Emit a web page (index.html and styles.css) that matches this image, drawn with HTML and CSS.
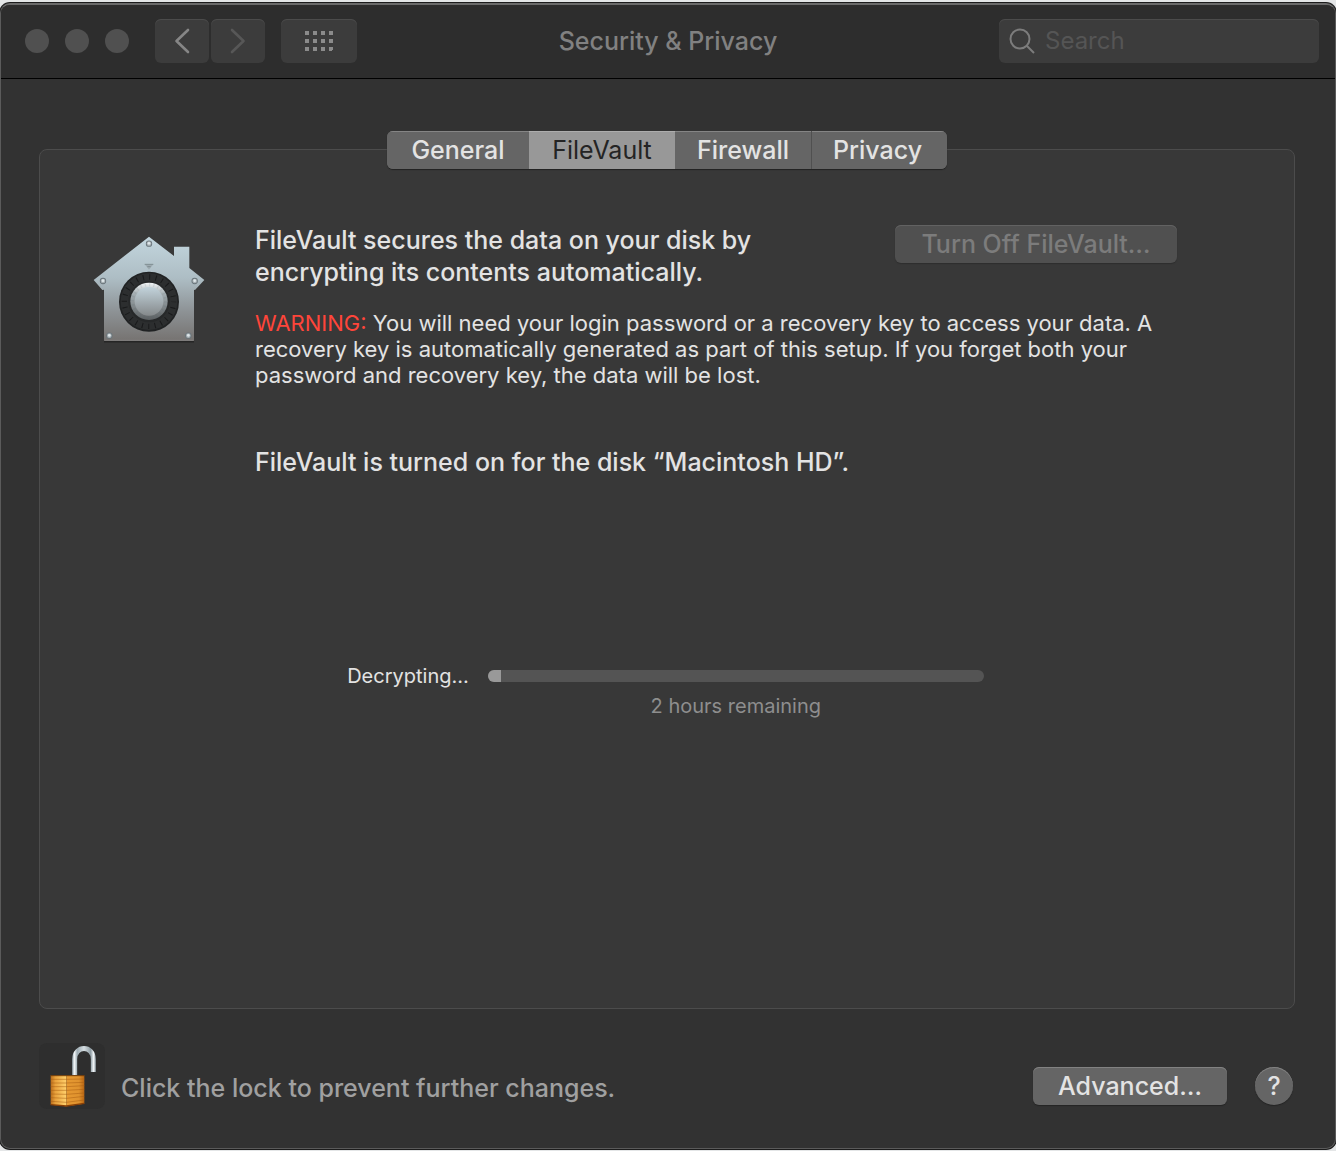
FILE: index.html
```html
<!DOCTYPE html>
<html lang="en">
<head>
<meta charset="utf-8">
<title>Security &amp; Privacy</title>
<link rel="stylesheet" href="styles.css">
</head>
<body>
<div class="window">
  <header class="titlebar">
    <div class="titlebar-left">
      <div class="lights">
        <button class="light" aria-label="Close"></button>
        <button class="light" aria-label="Minimize"></button>
        <button class="light" aria-label="Zoom"></button>
      </div>
      <div class="history">
        <button class="tool" aria-label="Back"><svg width="16" height="26" viewBox="0 0 16 26"><path d="M14 2 2.500 13 14 24" fill="none" stroke="#868686" stroke-width="2.600" stroke-linecap="round" stroke-linejoin="round"/></svg></button>
        <button class="tool" aria-label="Forward" disabled><svg width="16" height="26" viewBox="0 0 16 26"><path d="M2 2 13.500 13 2 24" fill="none" stroke="#575757" stroke-width="2.600" stroke-linecap="round" stroke-linejoin="round"/></svg></button>
      </div>
      <button class="tool tool-wide" aria-label="Show all"><svg width="28" height="20" viewBox="0 0 28 20" fill="#8b8b8b"><path d="M0 0h4v4H0zM8 0h4v4H8zM16 0h4v4h-4zM24 0h4v4h-4zM0 8h4v4H0zM8 8h4v4H8zM16 8h4v4h-4zM24 8h4v4h-4zM0 16h4v4H0zM8 16h4v4H8zM16 16h4v4h-4zM24 16h4v3h-1v1h-3z"/></svg></button>
    </div>
    <h1 class="title">Security &amp; Privacy</h1>
    <label class="search">
      <svg width="26" height="26" viewBox="0 0 26 26" fill="none" stroke="#7c7c7c" stroke-width="2"><circle cx="11" cy="11" r="9.500"/><path d="m18 18 7 7"/></svg>
      <input type="search" placeholder="Search" aria-label="Search">
    </label>
  </header>

  <main class="content">
    <div class="tabs" role="tablist">
      <button class="tab tab-general" role="tab">General</button>
      <button class="tab tab-filevault" role="tab" aria-selected="true">FileVault</button>
      <button class="tab tab-firewall" role="tab">Firewall</button>
      <button class="tab tab-privacy" role="tab">Privacy</button>
    </div>

    <section class="panel">
      <div class="info">
        <svg class="house" width="112" height="110" viewBox="39 30 336 330">
          <defs>
            <linearGradient id="metal" x1="0" y1="0" x2="0" y2="1"><stop offset="0" stop-color="#c3d6de"/><stop offset=".4" stop-color="#adbdc4"/><stop offset=".72" stop-color="#8d9295"/><stop offset="1" stop-color="#767371"/></linearGradient>
            <linearGradient id="rim" x1="0" y1="0" x2="0" y2="1"><stop offset="0" stop-color="#f4f7f8"/><stop offset=".3" stop-color="#a4aeb2"/><stop offset="1" stop-color="#5b5f61"/></linearGradient>
            <linearGradient id="knob" x1="0" y1="0" x2="0" y2="1"><stop offset="0" stop-color="#c2d3db"/><stop offset="1" stop-color="#85898b"/></linearGradient>
            <g id="screw"><circle r="9.500" fill="#69747a"/><circle r="7" fill="#aab3b7"/><circle cy="-1" r="4" fill="#dfe7ea"/></g>
          </defs>
          <path d="M72 350h270" stroke="#252525" stroke-width="5"/>
          <path d="M207 35 282 93V65h46v64l45 36-28 30-3-1v153H72V194l-5 1-26-30z" fill="url(#metal)"/>
          <path d="M73 346h268" stroke="#92908f" stroke-width="2"/>
          <path d="M194 118h26l-13 16z" fill="#9eabb1"/><path d="M194 118h26M202 125h10" stroke="#6e7b81" stroke-width="2"/>
          <circle cx="207" cy="230" r="90" fill="#202223"/>
          <circle cx="207" cy="230" r="85" fill="#2c2e2f"/>
          <circle cx="207" cy="230" r="74" fill="none" stroke="#191a1b" stroke-width="16" stroke-dasharray="3 16.370" stroke-dashoffset="1.500"/>
          <circle cx="207" cy="230" r="62" fill="#262829"/>
          <circle cx="207" cy="229" r="56" fill="url(#rim)"/>
          <circle cx="207" cy="229" r="50" fill="none" stroke="#55606a" stroke-opacity=".12" stroke-width="10" stroke-dasharray="4 9"/>
          <circle cx="207" cy="229" r="43" fill="url(#knob)"/>
          <use href="#screw" x="207" y="56"/><use href="#screw" x="69" y="168"/><use href="#screw" x="344" y="168"/><use href="#screw" x="88" y="332"/><use href="#screw" x="325" y="332"/>
        </svg>
        <div class="details">
          <div class="intro">
            <h2 class="lead">FileVault secures the data on your disk by encrypting its contents automatically.</h2>
            <button class="push turn-off" disabled>Turn Off FileVault…</button>
          </div>
          <p class="warning"><strong class="alert">WARNING:</strong> You will need your login password or a recovery key to access your data. A recovery key is automatically generated as part of this setup. If you forget both your password and recovery key, the data will be lost.</p>
          <p class="status">FileVault is turned on for the disk “Macintosh HD”.</p>
        </div>
      </div>
      <div class="progress">
        <label class="progress-label" for="decrypt">Decrypting…</label>
        <progress class="bar" id="decrypt" value="26" max="1000"></progress>
        <p class="remaining">2 hours remaining</p>
      </div>
    </section>

    <footer class="footer">
      <button class="lock" aria-label="Lock">
        <svg width="66" height="66" viewBox="27 39 198 198">
          <defs>
            <linearGradient id="brassL" x1="0" x2="1"><stop offset="0" stop-color="#b96d1c"/><stop offset=".3" stop-color="#e9a23c"/><stop offset="1" stop-color="#ffd06c"/></linearGradient>
            <linearGradient id="brassR" x1="0" x2="1"><stop offset="0" stop-color="#e79a32"/><stop offset=".7" stop-color="#df922e"/><stop offset="1" stop-color="#b96512"/></linearGradient>
            <linearGradient id="steel" x1="126" x2="198" y1="0" y2="0" gradientUnits="userSpaceOnUse"><stop offset="0" stop-color="#8b9ba3"/><stop offset=".1" stop-color="#f2f6f8"/><stop offset=".22" stop-color="#9eacb3"/><stop offset=".5" stop-color="#d5dde1"/><stop offset=".78" stop-color="#8f9da4"/><stop offset=".9" stop-color="#f2f6f8"/><stop offset="1" stop-color="#87949b"/></linearGradient>
          </defs>
          <path d="M134 136V88c0-43 56-43 56 0v38" fill="none" stroke="url(#steel)" stroke-width="15"/>
          <path d="M62 136h47v93l-47-5z" fill="url(#brassL)"/>
          <path d="M109 136h54v85l-54 8z" fill="url(#brassR)"/>
          <path d="M62 148h47l54-1M62 159h47l54-2M62 170h47l54-3M62 181h47l54-3M62 192l47 1 54-4M62 203l47 2 54-6M62 214l47 3 54-7" fill="none" stroke="#a85b10" stroke-opacity=".5" stroke-width="3"/>
          <path d="M62 137h101" stroke="#6d3909" stroke-width="3"/><path d="m62 224 47 4 54-8" fill="none" stroke="#873f06" stroke-width="4"/>
        </svg>
      </button>
      <p class="lock-hint">Click the lock to prevent further changes.</p>
      <div class="actions">
        <button class="push advanced">Advanced…</button>
        <button class="help" aria-label="Help">?</button>
      </div>
    </footer>
  </main>
</div>
</body>
</html>
```
FILE: styles.css
```css
* {
  box-sizing: border-box;
}

body {
  margin: 0;
  padding: 3px 0 2px;
  min-height: 100vh;
  display: flex;
  background: #e4e6e7;
  color: #e3e3e3;
  font-family: Inter, "Liberation Sans", sans-serif;
  font-size: 25px;
  font-weight: 500;
  line-height: 32px;
}

h1, h2, p {
  margin: 0;
  font-weight: inherit;
}

button, input {
  margin: 0;
  padding: 0;
  border: 0;
  font: inherit;
  color: inherit;
}

svg {
  display: block;
  flex: none;
}

.window {
  flex: 1;
  min-width: 0;
  display: flex;
  flex-direction: column;
  overflow: hidden;
  background: #323232;
  border: 1px solid #5b5b5b;
  border-top: 2px solid #6a6a6a;
  border-radius: 10px;
  box-shadow: 0 0 0 1px #1c1c1c;
}

.titlebar {
  display: grid;
  grid-template-columns: 1fr auto 1fr;
  align-items: center;
  padding: 14px 16px 15px;
  background: #2d2d2d;
  border-bottom: 1px solid #000;
}

.titlebar-left {
  display: flex;
  align-items: center;
  padding-left: 8px;
}

.lights {
  display: flex;
  gap: 16px;
  margin-right: 26px;
}

.light {
  width: 24px;
  height: 24px;
  border-radius: 50%;
  background: #505050;
}

.history {
  display: flex;
  gap: 2px;
  margin-right: 16px;
}

.tool {
  display: flex;
  align-items: center;
  justify-content: center;
  width: 54px;
  height: 44px;
  border-radius: 6px;
  background: #3c3c3c;
  box-shadow: inset 0 1px #4b4b4b;
}

.tool-wide {
  width: 76px;
}

.title {
  font-size: 25px;
  line-height: 32px;
  color: #818181;
}

.search {
  justify-self: end;
  display: flex;
  align-items: center;
  gap: 10px;
  width: 320px;
  height: 44px;
  padding: 0 10px;
  border-radius: 6px;
  background: #3c3c3c;
  box-shadow: inset 0 1px #4b4b4b;
}

.search input {
  flex: 1;
  min-width: 0;
  background: none;
  outline: none;
  font-size: 24px;
  font-weight: 400;
}

.search input::placeholder {
  color: #555;
}

.content {
  flex: 1;
  display: flex;
  flex-direction: column;
  padding: 52px 40px 39px 38px;
}

.tabs {
  position: relative;
  align-self: center;
  display: flex;
  margin-bottom: -20px;
  border-radius: 6px;
  overflow: hidden;
  background: #656565;
  box-shadow: 0 1px 1px #222;
}

.tab {
  height: 38px;
  background: #656565;
  box-shadow: inset 0 1px #858585;
}

.tab-general {
  width: 142px;
}

.tab-filevault {
  width: 146px;
}

.tab-firewall {
  width: 137px;
  border-right: 1px solid #505050;
}

.tab-privacy {
  width: 135px;
  padding-right: 4px;
}

.tab[aria-selected="true"] {
  background: #989898;
  box-shadow: inset 0 1px #adadad;
  color: #242424;
  font-weight: 400;
}

.panel {
  flex: 1;
  padding: 74px 56px 40px 53px;
  border: 1px solid #4c4c4c;
  border-radius: 8px;
  background: #383838;
}

.info {
  display: flex;
  gap: 50px;
  padding-right: 61px;
}

.house {
  margin-top: 11px;
}

.details {
  flex: 1;
}

.intro {
  display: flex;
  justify-content: space-between;
  align-items: flex-start;
  gap: 40px;
}

.lead {
  font-size: 25px;
  line-height: 32px;
}

.push {
  flex: none;
  height: 38px;
  border-radius: 6px;
  background: #656565;
  box-shadow: inset 0 1px #828282, 0 1px 1px #242424;
}

.turn-off {
  width: 282px;
  margin-top: 1px;
  background: #505050;
  box-shadow: inset 0 1px #626262, 0 1px 1px #2e2e2e;
  color: #7c7c7c;
}

.warning {
  margin-top: 22px;
  font-size: 22px;
  font-weight: 400;
  line-height: 26px;
}

.alert {
  font-weight: 400;
  color: #ff453a;
}

.status {
  margin-top: 58px;
}

.progress {
  display: grid;
  grid-template-columns: auto minmax(0, 496px);
  justify-content: center;
  align-items: center;
  column-gap: 19px;
  margin-top: 183px;
  font-size: 20px;
  line-height: 30px;
}

.progress-label {
  font-weight: 400;
}

.bar {
  appearance: none;
  width: 100%;
  height: 12px;
  border: 0;
  border-radius: 6px;
  overflow: hidden;
  background: #545454;
}

.bar::-webkit-progress-bar {
  background: #545454;
}

.bar::-webkit-progress-value {
  background: #999;
}

.remaining {
  grid-column: 2;
  text-align: center;
  font-weight: 400;
  color: #8e8e8e;
}

.footer {
  display: flex;
  align-items: flex-end;
  padding-top: 34px;
}

.lock {
  border-radius: 8px;
  background: #2e2e2e;
}

.lock-hint {
  margin: 0 16px 5px;
  color: #a0a0a0;
}

.actions {
  display: flex;
  gap: 28px;
  margin: 0 2px 4px auto;
}

.advanced {
  width: 194px;
}

.help {
  width: 38px;
  height: 38px;
  border-radius: 50%;
  background: #656565;
  box-shadow: inset 0 1px #828282, 0 1px 1px #242424;
}
```
